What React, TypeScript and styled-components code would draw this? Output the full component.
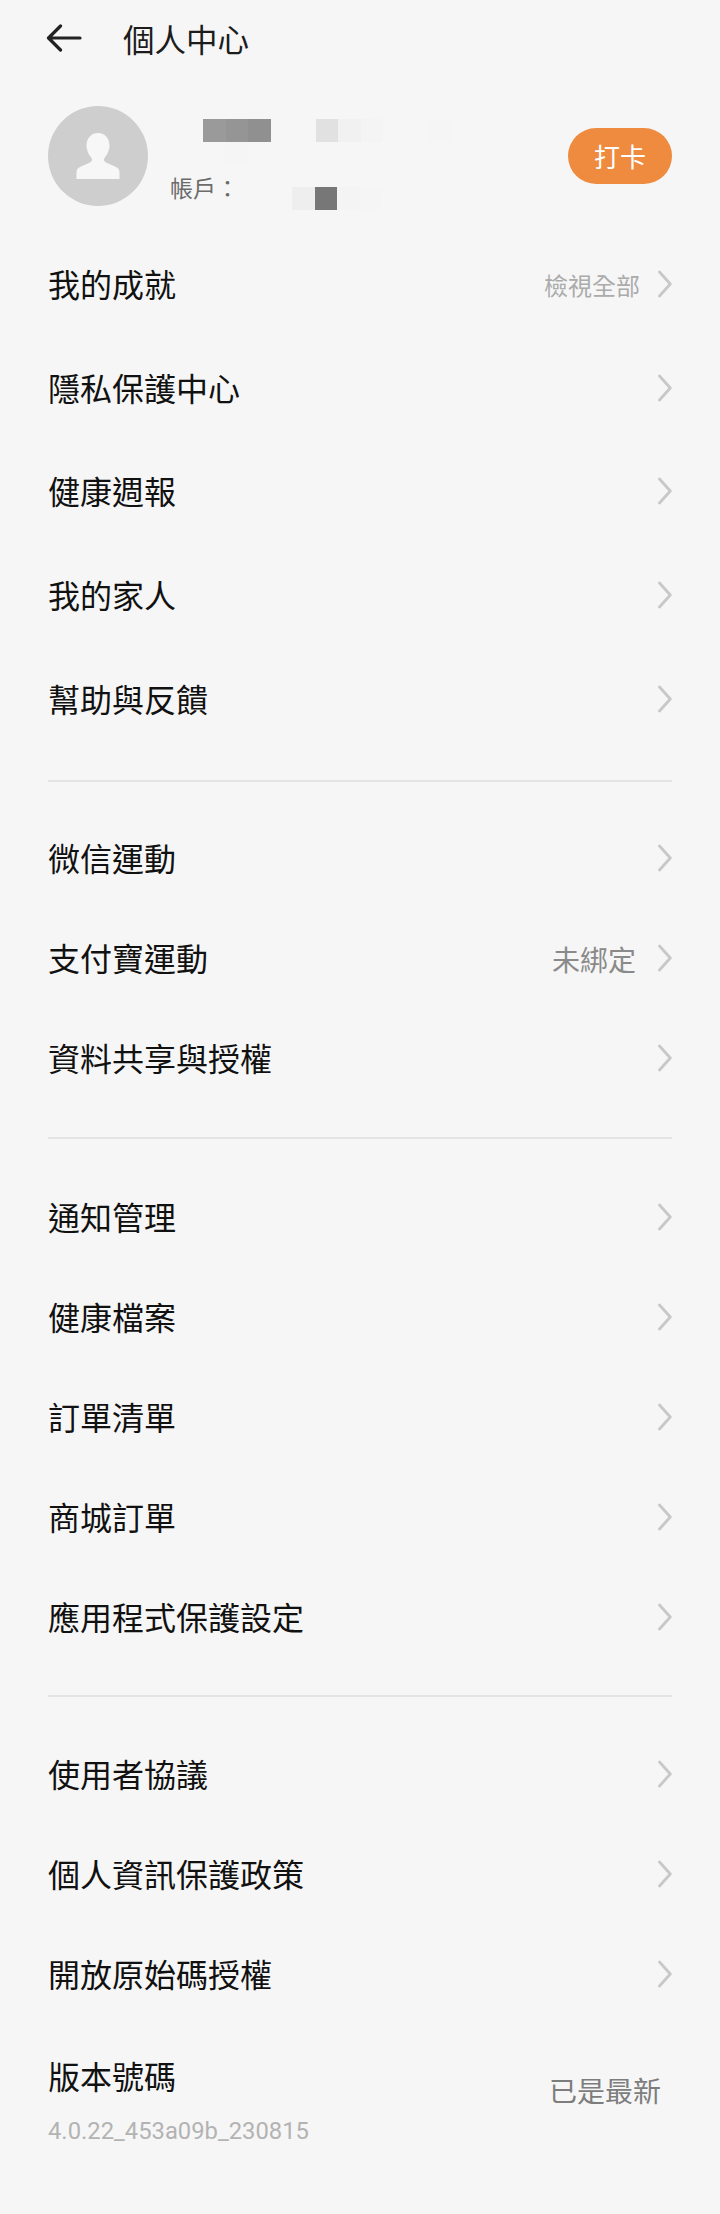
import React from "react";
import styled, { createGlobalStyle } from "styled-components";

const Global = createGlobalStyle`
  html, body { margin: 0; padding: 0; background: #f6f6f6; }
  body { font-family: "Noto Sans CJK TC", "Noto Sans", sans-serif; }
`;

const Page = styled.div`
  width: 720px;
  height: 2214px;
  overflow: hidden;
  background: #f6f6f6;
  padding: 0 48px;
  box-sizing: border-box;
`;

const Header = styled.header`
  height: 76px;
  display: flex;
  align-items: center;
`;

const BackIcon = styled.svg`
  width: 36px;
  height: 28px;
  margin-left: -2px;
  margin-right: 41px;
  flex: none;
`;

const Title = styled.h1`
  margin: -1px 0 0;
  font-size: 31.5px;
  font-weight: 400;
  color: #1c1c1c;
  line-height: 44px;
`;

const Profile = styled.section`
  height: 157px;
  display: flex;
  align-items: flex-start;
`;

const Avatar = styled.div`
  width: 100px;
  height: 100px;
  margin-top: 30px;
  border-radius: 50%;
  background: #cecece;
  display: flex;
  align-items: center;
  justify-content: center;
  flex: none;
`;

const Info = styled.div`
  margin-left: 22px;
  margin-top: 43px;
  flex: 1;
  display: flex;
  flex-direction: column;
`;

const Mosaic = styled.div<{ $indent: number }>`
  display: flex;
  padding-left: ${(p) => p.$indent}px;
`;

const Block = styled.span<{ $color: string; $h?: number }>`
  width: 22.5px;
  height: ${(p) => p.$h ?? 23}px;
  background: ${(p) => p.$color};
  flex: none;
`;

const Account = styled.div`
  display: flex;
  align-items: flex-start;
  margin-top: 24px;
  height: 23px;
`;

const AccountLabel = styled.span`
  font-size: 23px;
  line-height: 32px;
  margin-top: -16px;
  color: #6b6b6b;
  width: 122px;
  flex: none;
`;

const CheckIn = styled.button`
  width: 104px;
  height: 56px;
  margin-top: 52px;
  border: 0;
  border-radius: 28px;
  background: #ee8b3f;
  color: #fff;
  font-family: inherit;
  font-size: 26px;
  line-height: 1;
  padding: 0;
  flex: none;
`;

const Row = styled.div<{ $h: number }>`
  height: ${(p) => p.$h}px;
  display: flex;
  align-items: center;
  justify-content: space-between;
`;

const Label = styled.span`
  font-size: 32px;
  line-height: 44px;
  margin-top: -4px;
  color: #111;
`;

const Side = styled.div`
  display: flex;
  align-items: center;
`;

const Hint = styled.span<{ $size: number; $color: string; $gap: number }>`
  font-size: ${(p) => p.$size}px;
  color: ${(p) => p.$color};
  margin-right: ${(p) => p.$gap}px;
  line-height: 36px;
`;

const Chevron = styled.svg`
  width: 16px;
  height: 28px;
  margin-top: -2px;
  flex: none;
`;

const Divider = styled.hr<{ $top: number; $bottom: number }>`
  border: 0;
  height: 2px;
  background: #e4e4e4;
  margin: ${(p) => p.$top}px 0 ${(p) => p.$bottom}px;
`;

const VersionRow = styled.div`
  display: flex;
  justify-content: space-between;
  align-items: flex-start;
  padding-top: 32px;
`;

const VersionText = styled.div`
  display: flex;
  flex-direction: column;
`;

const VersionNumber = styled.span`
  font-family: Roboto, sans-serif;
  font-size: 23.8px;
  line-height: 32px;
  margin-top: 18px;
  color: #b3b3b3;
`;

const Latest = styled.span`
  font-size: 28px;
  line-height: 40px;
  color: #7d7d7d;
  margin: 13px 11px 0 0;
`;

const Arrow = () => (
  <Chevron viewBox="0 0 16 28" fill="none">
    <path d="M3.500 2L14.300 14 3.500 26" stroke="#c8c8c8" strokeWidth="2.800" strokeLinecap="round" strokeLinejoin="round" />
  </Chevron>
);

type Item = { label: string; hint?: "all" | "unbound" };

const sections: { height: number; items: Item[]; after?: [number, number] }[] = [
  {
    height: 103.7,
    items: [
      { label: "我的成就", hint: "all" },
      { label: "隱私保護中心" },
      { label: "健康週報" },
      { label: "我的家人" },
      { label: "幫助與反饋" },
    ],
    after: [29, 27],
  },
  {
    height: 100,
    items: [{ label: "微信運動" }, { label: "支付寶運動", hint: "unbound" }, { label: "資料共享與授權" }],
    after: [28, 28],
  },
  {
    height: 100.2,
    items: [
      { label: "通知管理" },
      { label: "健康檔案" },
      { label: "訂單清單" },
      { label: "商城訂單" },
      { label: "應用程式保護設定" },
    ],
    after: [27, 28],
  },
  {
    height: 100,
    items: [{ label: "使用者協議" }, { label: "個人資訊保護政策" }, { label: "開放原始碼授權" }],
  },
];

const nameBlocks = ["#9a9a9a", "#959595", "#909090", "transparent", "transparent", "#e1e1e1", "#f1f1f1", "#f4f4f4", "transparent", "transparent", "#f5f5f5"];
const accountBlocks = ["#eeeeee", "#777777", "#f4f4f4", "#f5f5f5"];

export default function App() {
  return (
    <Page>
      <Global />
      <Header>
        <BackIcon viewBox="0 0 36 28" fill="none">
          <path d="M34 14H3M14.500 2L2.500 14l12 12" stroke="#222" strokeWidth="3.200" strokeLinecap="round" strokeLinejoin="round" />
        </BackIcon>
        <Title>個人中心</Title>
      </Header>
      <Profile>
        <Avatar>
          <svg width="44" height="46" viewBox="0 0 44 46" fill="#f7f7f7">
            <path d="M22 0c7 0 11.500 5.500 11.500 12.500 0 5-2.500 9.500-5 12.500-1 1.500-.5 3.500 1.500 4.500l10 4.500c2.500 1 3.500 3 3.500 5.500V46H.5v-6.500c0-2.500 1-4.500 3.500-5.500l10-4.500c2-1 2.500-3 1.500-4.500-2.500-3-5-7.500-5-12.500C10.500 5.500 15 0 22 0z" />
          </svg>
        </Avatar>
        <Info>
          <Mosaic $indent={33}>
            {nameBlocks.map((c, i) => (
              <Block key={i} $color={c} />
            ))}
          </Mosaic>
          <Mosaic $indent={55}>
            <Block $color="#f5f5f5" $h={21} />
          </Mosaic>
          <Account>
            <AccountLabel>帳戶：</AccountLabel>
            {accountBlocks.map((c, i) => (
              <Block key={i} $color={c} />
            ))}
          </Account>
        </Info>
        <CheckIn>打卡</CheckIn>
      </Profile>
      {sections.map((s, i) => (
        <div key={i}>
          {s.items.map((it) => (
            <Row key={it.label} $h={s.height}>
              <Label>{it.label}</Label>
              <Side>
                {it.hint === "all" && (
                  <Hint $size={24} $color="#ababab" $gap={16}>
                    檢視全部
                  </Hint>
                )}
                {it.hint === "unbound" && (
                  <Hint $size={28} $color="#8a8a8a" $gap={20}>
                    未綁定
                  </Hint>
                )}
                <Arrow />
              </Side>
            </Row>
          ))}
          {s.after && <Divider $top={s.after[0]} $bottom={s.after[1]} />}
        </div>
      ))}
      <VersionRow>
        <VersionText>
          <Label>版本號碼</Label>
          <VersionNumber>4.0.22_453a09b_230815</VersionNumber>
        </VersionText>
        <Latest>已是最新</Latest>
      </VersionRow>
    </Page>
  );
}
